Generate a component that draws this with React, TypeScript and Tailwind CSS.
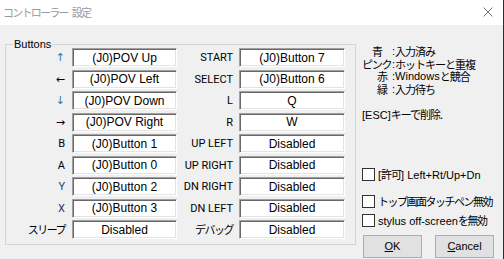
const LEFT_ROWS: { label: string; value: string; tone?: string; font?: string }[] = [
  { label: "↑", value: "(J0)POV Up", tone: "text-[#2f74aa]", font: "arrow" },
  { label: "←", value: "(J0)POV Left", font: "arrow" },
  { label: "↓", value: "(J0)POV Down", tone: "text-[#2f74aa]", font: "arrow" },
  { label: "→", value: "(J0)POV Right", font: "arrow" },
  { label: "B", value: "(J0)Button 1" },
  { label: "A", value: "(J0)Button 0" },
  { label: "Y", value: "(J0)Button 2", tone: "text-[#1d3f6e]" },
  { label: "X", value: "(J0)Button 3", tone: "text-[#1d3f6e]" },
  { label: "スリープ", value: "Disabled", font: "cjk" },
];

const MID_ROWS: { label: string; value: string; font?: string }[] = [
  { label: "START", value: "(J0)Button 7" },
  { label: "SELECT", value: "(J0)Button 6" },
  { label: "L", value: "Q" },
  { label: "R", value: "W" },
  { label: "UP LEFT", value: "Disabled" },
  { label: "UP RIGHT", value: "Disabled" },
  { label: "DN RIGHT", value: "Disabled" },
  { label: "DN LEFT", value: "Disabled" },
  { label: "デバッグ", value: "Disabled", font: "cjk" },
];

const labelFont = (font?: string) => {
  if (font === "arrow") return "font-['DejaVu_Sans',sans-serif] text-[11px]";
  if (font === "cjk") return "font-['Noto_Sans_CJK_JP',sans-serif] text-[11px] tracking-[-1.5px]";
  return "font-['Roboto','Noto_Sans_CJK_JP',sans-serif] text-[11px]";
};

function KeyBox({ value, width }: { value: string; width: string }) {
  return (
    <div
      className={`${width} h-[19px] flex items-center justify-center bg-white border border-t-[#a0a0a0] border-l-[#a0a0a0] border-b-white border-r-white shadow-[inset_1px_1px_0_#696969,inset_-1px_-1px_0_#e3e3e3] text-[12px] leading-none text-black font-['Liberation_Sans',sans-serif]`}
    >
      {value}
    </div>
  );
}

function CheckRow({ children, className }: { children: React.ReactNode; className?: string }) {
  return (
    <div className={`flex items-center h-[13px] ${className ?? ""}`}>
      <span className="w-[13px] h-[13px] border border-[#333] bg-white shrink-0" />
      <span className="ml-[3px] leading-none whitespace-nowrap">{children}</span>
    </div>
  );
}

const J = ({ children, t = "tracking-[-1.5px]" }: { children: React.ReactNode; t?: string }) => (
  <span className={`font-['Noto_Sans_CJK_JP',sans-serif] ${t}`}>{children}</span>
);

const cjkLabel = "w-[30px] font-['Noto_Sans_CJK_JP',sans-serif]";

export default function App() {
  return (
    <div className="w-[504px] h-[259px] flex flex-col border-r border-[#2d2d2d] overflow-hidden text-black font-['Liberation_Sans','Noto_Sans_CJK_JP',sans-serif] text-[11px]">
      {/* Title bar */}
      <div className="h-[25px] bg-white flex items-center justify-between shrink-0">
        <div className="pl-[3px] flex text-[11px] text-[#999] tracking-[-1.75px] font-['Noto_Sans_CJK_JP',sans-serif]">
          <span>コントローラー</span>
          <span className="ml-[4px]">設定</span>
        </div>
        <svg width="10" height="10" viewBox="0 0 10 10" className="mr-[10px] mb-[2px]">
          <path d="M0.5 0.5 9.5 9.5M9.5 0.5 0.5 9.5" stroke="#777" strokeWidth="1" />
        </svg>
      </div>

      <div className="flex flex-1 bg-[#f0f0f0]">
        {/* Buttons group */}
        <fieldset className="ml-[5px] mt-[15px] w-[351px] h-[205px] border border-[#d5d5d5]">
          <legend className="ml-[7px] px-[1px] leading-[8px] text-[11px]">Buttons</legend>
          <div className="flex">
            <div className="flex flex-col gap-[2.5px]">
              {LEFT_ROWS.map((r) => (
                <div key={r.label} className="flex items-center gap-[7px]">
                  <div className={`w-[59px] text-right leading-none ${labelFont(r.font)} ${r.tone ?? ""}`}>
                    {r.label}
                  </div>
                  <KeyBox value={r.value} width="w-[105px]" />
                </div>
              ))}
            </div>
            <div className="flex flex-col gap-[2.5px]">
              {MID_ROWS.map((r) => (
                <div key={r.label} className="flex items-center gap-[6px]">
                  <div className={`w-[56px] text-right leading-none whitespace-nowrap ${labelFont(r.font)}`}>
                    {r.label}
                  </div>
                  <KeyBox value={r.value} width="w-[106px]" />
                </div>
              ))}
            </div>
          </div>
        </fieldset>

        {/* Right panel */}
        <div className="ml-[6px] flex flex-col">
          <div className="pt-[20px] leading-[12.5px]">
            <div className="flex h-[12.5px]">
              <span className={`${cjkLabel} pl-[10px]`}>青</span>
              <span>:</span>
              <J t="tracking-[-1px]">入力済み</J>
            </div>
            <div className="flex h-[12.5px]">
              <span className={`${cjkLabel} tracking-[-1.25px]`}>ピンク</span>
              <span>:</span>
              <J t="tracking-[-1px]">ホットキーと重複</J>
            </div>
            <div className="flex h-[12.5px]">
              <span className={`${cjkLabel} pl-[15px]`}>赤</span>
              <span>:</span>
              <span>Windows</span>
              <J t="tracking-[-1px]">と競合</J>
            </div>
            <div className="flex h-[12.5px]">
              <span className={`${cjkLabel} pl-[15px]`}>緑</span>
              <span>:</span>
              <J t="tracking-[-1px]">入力待ち</J>
            </div>
          </div>
          <div className="mt-[12.5px] h-[12.5px] leading-[12.5px]">
            [ESC]<J t="tracking-[-1px]">キーで削除.</J>
          </div>

          <CheckRow className="mt-[48px]">
            [<J t="tracking-[-1px]">許可</J>] Left+Rt/Up+Dn
          </CheckRow>
          <CheckRow className="mt-[14px]">
            <J>トップ画面タッチペン無効</J>
          </CheckRow>
          <CheckRow className="mt-[6px]">
            stylus off-screen<J>を無効</J>
          </CheckRow>

          <div className="mt-[7.5px] flex gap-[13px] pl-[1px]">
            <button className="w-[59px] h-[23px] bg-[#e1e1e1] border border-[#adadad] text-[11px] leading-none">
              <span className="underline">O</span>K
            </button>
            <button className="w-[59px] h-[23px] bg-[#e1e1e1] border border-[#adadad] text-[11px] leading-none">
              <span className="underline">C</span>ancel
            </button>
          </div>
        </div>
      </div>
    </div>
  );
}
